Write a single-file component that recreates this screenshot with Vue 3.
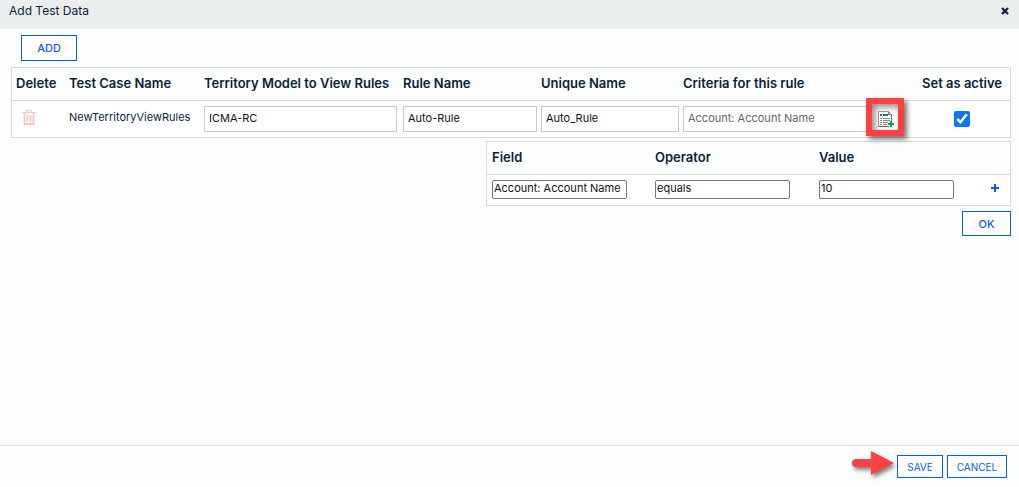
<script setup>
import { ref } from 'vue'

const row = ref({
  name: 'NewTerritoryViewRules',
  model: 'ICMA-RC',
  rule: 'Auto-Rule',
  unique: 'Auto_Rule',
  criteria: 'Account: Account Name',
  active: true
})
const condition = ref({ field: 'Account: Account Name', operator: 'equals', value: '10' })
</script>

<template>
  <div class="dialog">
    <header class="title-bar">
      <h1>Add Test Data</h1>
      <button class="close" type="button" aria-label="Close">
        <svg width="8" height="8" viewBox="0 0 8 8"><path d="M1 1l6 6M7 1L1 7" stroke="#10233f" stroke-width="2.3" /></svg>
      </button>
    </header>

    <main class="content">
      <button class="btn add" type="button">ADD</button>

      <table class="grid">
        <colgroup>
          <col class="c-delete" /><col class="c-name" /><col class="c-model" /><col class="c-rule" />
          <col class="c-unique" /><col /><col class="c-active" />
        </colgroup>
        <thead>
          <tr>
            <th>Delete</th>
            <th>Test Case Name</th>
            <th id="h-model">Territory Model to View Rules</th>
            <th id="h-rule">Rule Name</th>
            <th id="h-unique">Unique Name</th>
            <th id="h-criteria">Criteria for this rule</th>
            <th id="h-active">Set as active</th>
          </tr>
        </thead>
        <tbody>
          <tr>
            <td>
              <button class="trash" type="button" aria-label="Delete">
                <svg width="14" height="15" viewBox="0 0 14 15" fill="none" stroke="#fbc3c3">
                  <path d="M0 2.5h14M4.5 2V.5h5V2" />
                  <path d="M2.5 3v11h9V3" stroke-width="1.8" />
                  <path d="M5.5 5v7M8.5 5v7" stroke-width="1.6" />
                </svg>
              </button>
            </td>
            <td class="case-name">{{ row.name }}</td>
            <td><input v-model="row.model" class="box" type="text" aria-labelledby="h-model" /></td>
            <td class="flush"><input v-model="row.rule" class="box" type="text" aria-labelledby="h-rule" /></td>
            <td class="flush"><input v-model="row.unique" class="box" type="text" aria-labelledby="h-unique" /></td>
            <td>
              <div class="criteria">
                <input v-model="row.criteria" class="box muted" type="text" aria-labelledby="h-criteria" />
                <button class="pick" type="button" aria-label="Edit criteria">
                  <svg width="17" height="17" viewBox="0 0 17 17">
                    <path d="M.5.5h10l3 3v12H.5z" fill="#fff" stroke="#999" />
                    <path d="M10.5.5v3h3v8" fill="none" stroke="#777" />
                    <path d="M.5 15.5h10" stroke="#666" />
                    <path d="M2 3h2v2H2zM5 3h5v2H5z" fill="#1769ee" />
                    <path d="M2 7.5h2M5 7.5h7M2 9.5h2M5 9.5h7M2 11.5h2M5 11.5h5M2 13.5h2M5 13.5h4" stroke="#8b8b8b" />
                    <path d="M13 10v6M10 13h6" stroke="#fff" stroke-width="3" />
                    <path d="M13 10v6M10 13h6" stroke="#00a650" stroke-width="2" />
                  </svg>
                </button>
              </div>
            </td>
            <td class="center"><input v-model="row.active" class="check" type="checkbox" aria-labelledby="h-active" /></td>
          </tr>
        </tbody>
      </table>

      <section class="conditions">
        <table class="grid">
          <colgroup>
            <col class="c-field" /><col class="c-operator" /><col class="c-operator" /><col />
          </colgroup>
          <thead>
            <tr>
              <th id="h-field">Field</th>
              <th id="h-operator">Operator</th>
              <th id="h-value">Value</th>
              <td></td>
            </tr>
          </thead>
          <tbody>
            <tr>
              <td><input v-model="condition.field" class="plain" type="text" aria-labelledby="h-field" /></td>
              <td><input v-model="condition.operator" class="plain" type="text" aria-labelledby="h-operator" /></td>
              <td><input v-model="condition.value" class="plain" type="text" aria-labelledby="h-value" /></td>
              <td>
                <button class="plus" type="button" aria-label="Add condition">
                  <svg width="8" height="8" viewBox="0 0 8 8"><path d="M4 0v8M0 4h8" stroke="#0a5cf5" stroke-width="2" /></svg>
                </button>
              </td>
            </tr>
          </tbody>
        </table>
        <button class="btn ok" type="button">OK</button>
      </section>
    </main>

    <footer class="actions">
      <svg class="arrow" width="50" height="34" viewBox="0 0 50 34" aria-hidden="true">
        <path d="M6 11h15V3l23 12-23 12v-8H6a4 4 0 0 1 0-8z" fill="#fb4141" />
      </svg>
      <button class="btn small" type="button">SAVE</button>
      <button class="btn small cancel" type="button">CANCEL</button>
    </footer>
  </div>
</template>

<style>
body {
  margin: 0;
  background: #fcfefd;
}
</style>

<style scoped>
.dialog {
  display: flex;
  flex-direction: column;
  min-height: 100vh;
  color: #0b1f3a;
  font-family: Inter, "Liberation Sans", sans-serif;
  font-size: 11px;
}
.dialog * {
  box-sizing: border-box;
}
button,
input {
  font: inherit;
}
button {
  padding: 0;
  border: 0;
  background: none;
}
.title-bar {
  display: flex;
  justify-content: space-between;
  align-items: flex-start;
  padding: 3px 9px 10px;
  background: #ebeeef;
}
h1 {
  margin: 0;
  font-size: 12px;
  line-height: 16px;
  font-weight: 400;
}
.close {
  display: flex;
  padding: 4px 1px;
}
.content {
  flex: 1;
  padding: 6px 8px 16px 11px;
}
.btn {
  border: 1px solid #0a5cf5;
  background: #fff;
  color: #0a5cf5;
  font-weight: 500;
}
.add {
  display: block;
  width: 56px;
  height: 26px;
  margin: 0 0 6px 10px;
}
.grid {
  width: 100%;
  table-layout: fixed;
  border-collapse: separate;
  border-spacing: 0;
  border: 1px solid #d9dadd;
}
th,
td {
  padding: 0 2px 0 4px;
  text-align: left;
  white-space: nowrap;
}
th {
  height: 33px;
  padding-bottom: 2px;
  font-size: 13px;
  font-weight: 600;
}
thead th,
thead td {
  border-bottom: 1px solid #d9dadd;
}
tbody td {
  height: 36px;
  background: #fff;
}
.c-delete { width: 53px; }
.c-name { width: 135px; }
.c-model { width: 199px; }
.c-rule { width: 138px; }
.c-unique { width: 142px; }
.c-active { width: 92px; }
.c-field { width: 163px; }
.c-operator { width: 164px; }
.flush {
  padding-right: 0;
}
.trash {
  display: flex;
  padding: 0 6px 4px;
}
.case-name {
  padding-bottom: 4px;
}
.box {
  display: block;
  width: 100%;
  height: 26px;
  padding: 0 4px 2px;
  border: 1px solid #c9cacc;
  background: #fff;
  color: #111;
}
.muted {
  color: #666;
}
.criteria {
  position: relative;
  padding-right: 46px;
}
.pick {
  position: absolute;
  top: -8px;
  right: 12px;
  display: flex;
  align-items: center;
  justify-content: center;
  width: 38px;
  height: 38px;
  padding: 4px 0 0 2px;
  border: 6px solid #fb4141;
  background: #fff;
  box-shadow: 3px 3px 5px rgba(0, 0, 0, 0.55), inset 3px 3px 6px rgba(0, 0, 0, 0.45);
}
.center {
  padding-right: 8px;
  text-align: center;
}
.check {
  width: 16px;
  height: 16px;
  margin: 0;
  vertical-align: middle;
  accent-color: #0a75ff;
}
.conditions {
  width: 525px;
  margin: 3px 0 0 auto;
}
.conditions th {
  padding-left: 5px;
}
.conditions tbody td {
  height: 30px;
  padding: 0 4px 2px 5px;
}
.plain {
  display: block;
  width: 135px;
  height: 19px;
  padding: 0 1px 2px;
  border: 1px solid #767676;
  border-radius: 2px;
  background: #fff;
  color: #111;
}
.plus {
  display: flex;
  margin: 0 7px 3px auto;
}
.ok {
  display: block;
  width: 49px;
  height: 25px;
  margin: 5px 0 0 auto;
}
.actions {
  display: flex;
  justify-content: flex-end;
  gap: 4px;
  padding: 9px 12px;
  border-top: 1px solid #dfe1e3;
}
.small {
  width: 46px;
  height: 23px;
  font-size: 10px;
  font-weight: 400;
}
.cancel {
  width: 60px;
}
.arrow {
  margin: -7px -7px -4px 0;
  filter: drop-shadow(2px 3px 2px rgba(0, 0, 0, 0.5));
}
</style>
